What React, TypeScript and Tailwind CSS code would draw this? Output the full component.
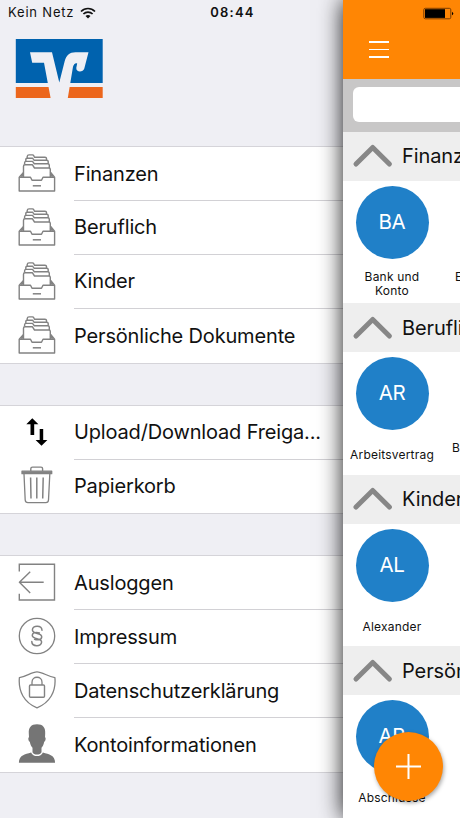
import React from 'react';

type Category = { title: string; initials: string; label: string; next?: React.ReactNode };

const categories: Category[] = [
  { title: 'Finanzen', initials: 'BA', label: 'Bank und Konto', next: <span className="ml-[3px]">E</span> },
  { title: 'Beruflich', initials: 'AR', label: 'Arbeitsvertrag', next: <span>B</span> },
  { title: 'Kinder', initials: 'AL', label: 'Alexander' },
  { title: 'Persönliche', initials: 'AB', label: 'Abschlüsse' },
];

// All menu icons share a 38px box and a thin grey stroke
function MenuSvg({ children }: { children: React.ReactNode }) {
  return (
    <svg width="38" height="38" viewBox="0 0 38 38" fill="none" stroke="#828282" strokeWidth="1.3" strokeLinejoin="round">
      {children}
    </svg>
  );
}

function DrawerIcon() {
  return (
    <MenuSvg>
      <path d="M1.2 23.2H12.5L14 26.3H23.5L25 23.2H36.6V37H1.2Z" strokeWidth="1.4" />
      <path d="M14.8 31.8H23" strokeWidth="1.5" />
      <path d="M5.5 23V12.3Q5.5 10.7 7 10.7H14.3L16.5 14H31Q32.3 14 32.3 15.5V23" strokeWidth="1.4" />
      <path d="M5.5 18.5L1.4 23M32.3 18L36.4 23M32.3 20L34.5 23M5.5 20.5L3.4 23" />
      <path d="M6.6 10.5V8.8Q6.6 7.4 8 7.4H14.5L16.3 9.7H29.8Q31.2 9.7 31.3 11V14" strokeWidth="1.4" />
      <path d="M7.8 7.2V5.6Q7.8 4.3 9.2 4.3H14.7L16.2 6.3H28.7Q30.2 6.3 30.2 7.5V9.7" strokeWidth="1.4" />
      <path d="M9.2 4V2.5Q9.4 .9 11 .9H14.4Q15.4 .9 15.8 1.8L16.4 3.2H27Q28.5 3.2 28.5 4.6V6.3" strokeWidth="1.4" />
    </MenuSvg>
  );
}

function UpDownIcon() {
  return (
    <svg width="38" height="38" viewBox="0 0 38 38" fill="#000">
      <path d="M14.3 5.2L20.4 11.2H16.2V22H12.5V11.2H8.3Z" />
      <path d="M23.5 32.8L17.6 26.9H21.7V16H25.2V26.9H29.4Z" />
    </svg>
  );
}

function TrashIcon() {
  return (
    <MenuSvg>
      <path d="M12.8 5V2.8Q12.8 1.1 14.5 1.1H23Q24.6 1.1 24.6 2.8V5" strokeWidth="1.4" />
      <path d="M4 5.2H33.7V7.7H4Z" fill="#828282" />
      <path d="M6 8L7.2 34Q7.4 36.6 10 36.6H27.8Q30.3 36.6 30.5 34L31.8 8" />
      <path d="M12.6 11.6L13 32.4M18.8 11.6V32.4M25.2 11.6L24.7 32.4" strokeWidth="1.5" />
    </MenuSvg>
  );
}

function LogoutIcon() {
  return (
    <MenuSvg>
      <path d="M1.3 8.4V1.3H36.5V37H1.3V30.8" strokeWidth="1.4" strokeLinejoin="miter" />
      <path d="M25.7 19.2H1.3M12.2 8.8L1.4 19.2L12.2 29.9" strokeWidth="1.4" />
    </MenuSvg>
  );
}

function ImprintIcon() {
  return (
    <MenuSvg>
      <circle cx="19" cy="19" r="17.7" />
      <path
        d="M24 13.2C23.7 7.6 14.3 8.2 14.4 13C14.5 17.5 23.6 15.6 23.7 19.7C23.8 23.2 18.9 23.2 16.6 22.4M21.4 16C18.6 14.8 14.2 15.4 14.3 18.6C14.4 22.8 23.6 20.7 23.6 25C23.5 30 14 29.9 13.8 24.6"
        strokeWidth="1.5"
        strokeLinecap="round"
      />
    </MenuSvg>
  );
}

function PrivacyIcon() {
  return (
    <MenuSvg>
      <path d="M1.4 6.6C8 5.7 13.6 .9 19 .9S30 5.7 36.9 6.6C38.2 20.5 31.8 31.6 19 36.8C6.2 31.6 .1 20.5 1.4 6.6Z" />
      <rect x="11.5" y="14" width="15" height="12.3" rx="1" strokeWidth="1.4" />
      <path d="M14 14V11.2C14 4.6 24 4.6 24 11.2V14" />
    </MenuSvg>
  );
}

function AccountIcon() {
  return (
    <svg width="38" height="39" viewBox="0 0 38 39" fill="#757575">
      <path d="M19 .2C13 .2 10.4 3.5 10.8 9.4L11 13.2C9.8 13.5 10.4 17.2 11.8 17.7C12.3 20.7 13.4 22.5 14.5 23.7V28.2C15.6 31.4 22.4 31.4 23.5 28.2V23.7C24.6 22.5 25.7 20.7 26.2 17.7C27.6 17.2 28.2 13.5 27 13.2L27.2 9.4C27.6 3.5 25 .2 19 .2Z" />
      <path d="M13.1 28.4C7 30.4 1 30.8.9 38.8H37.1C37 30.8 31 30.4 24.9 28.4C23.2 33.2 14.8 33.2 13.1 28.4Z" />
    </svg>
  );
}

function MenuRow({ icon, text, last }: { icon: React.ReactNode; text: string; last?: boolean }) {
  return (
    <div className="flex h-[53.85px] items-center pl-[18px]">
      <div className="pb-[2px]">{icon}</div>
      <div
        className={
          last
            ? 'ml-[18px] flex h-full flex-1 items-center'
            : 'ml-[18px] flex h-full flex-1 items-center border-b border-[#d2d1d5]'
        }
      >
        <span className="text-[20px] tracking-[-0.16px]">{text}</span>
      </div>
    </div>
  );
}

function MenuGroup({ children }: { children: React.ReactNode }) {
  return <div className="-mb-px border-y border-[#d5d4d9] bg-white">{children}</div>;
}

function VrLogo() {
  return (
    <svg className="ml-[15px] mt-[12px]" width="88" height="60" viewBox="0 0 88 60">
      <path d="M.8 1H87.7V45H.8Z" fill="#0062ae" />
      <path d="M.8 49H87.7V60H.8Z" fill="#ec661c" />
      <path
        d="M15 14.2H37L44.3 44.5L49.6 23.5C51.4 17 54.5 14.2 60.5 14.2H73.5L69.3 30.5C68.2 34.6 60.8 34.6 61.3 29.8L62.2 25.4C60.3 24.6 58.6 26.2 58 28.8L52.8 60H35.6L29 24.8H17.2Z"
        fill="#efeff4"
      />
    </svg>
  );
}

function WifiIcon() {
  return (
    <svg className="ml-[6px]" width="16" height="12" viewBox="0 0 16 12" fill="none" stroke="#111" strokeWidth="1.7">
      <path d="M1 4.5C5 .5 11 .5 15 4.5M3.4 7C6 4.4 10 4.4 12.6 7" />
      <path d="M8 11.5L5.5 9C7 7.7 9 7.7 10.5 9Z" fill="#111" stroke="none" />
    </svg>
  );
}

function CategorySection({ title, initials, label, next }: Category) {
  return (
    <section className="h-[171.5px]">
      <div className="flex h-[49px] items-center bg-[#eee]">
        <svg className="ml-[9px] shrink-0" width="42" height="26" viewBox="0 0 42 26" fill="none">
          <path d="M4 21L20.7 4.5L37.4 21" stroke="#878787" strokeWidth="5" strokeLinecap="round" strokeLinejoin="round" />
        </svg>
        <h2 className="ml-[8px] whitespace-nowrap text-[20px] tracking-[-0.1px]">{title}</h2>
      </div>
      <div className="flex pt-[5px]">
        <div className="flex w-[98px] shrink-0 flex-col items-center">
          <div className="flex size-[73px] items-center justify-center rounded-full bg-[#2080c8] text-[20.5px] tracking-[-0.4px] text-white">
            {initials}
          </div>
          <div className="mt-[10px] flex h-[30px] w-[86px] items-center justify-center text-center text-[12px] leading-[14px] tracking-[0.2px]">
            {label}
          </div>
        </div>
        {next && <div className="ml-[11px] pt-[84px] text-[12px] leading-[14px]">{next}</div>}
      </div>
    </section>
  );
}

export default function App() {
  return (
    <div className="relative flex h-[818px] w-[460px] overflow-hidden bg-[#efeff4] font-['Inter',sans-serif] text-[#111]">
      <nav className="w-[343px] shrink-0">
        <div className="h-[146.2px]">
          <div className="flex h-[26px] items-center pl-[8px] text-[13px] tracking-[0.8px]">
            Kein Netz
            <WifiIcon />
            <span className="ml-[114px] font-semibold tracking-[1.2px]">08:44</span>
          </div>
          <VrLogo />
        </div>
        <div className="flex flex-col gap-[42.1px]">
          <MenuGroup>
            <MenuRow icon={<DrawerIcon />} text="Finanzen" />
            <MenuRow icon={<DrawerIcon />} text="Beruflich" />
            <MenuRow icon={<DrawerIcon />} text="Kinder" />
            <MenuRow icon={<DrawerIcon />} text="Persönliche Dokumente" last />
          </MenuGroup>
          <MenuGroup>
            <MenuRow icon={<UpDownIcon />} text="Upload/Download Freiga..." />
            <MenuRow icon={<TrashIcon />} text="Papierkorb" last />
          </MenuGroup>
          <MenuGroup>
            <MenuRow icon={<LogoutIcon />} text="Ausloggen" />
            <MenuRow icon={<ImprintIcon />} text="Impressum" />
            <MenuRow icon={<PrivacyIcon />} text="Datenschutzerklärung" />
            <MenuRow icon={<AccountIcon />} text="Kontoinformationen" last />
          </MenuGroup>
        </div>
      </nav>

      {/* Main screen, pushed aside by the open drawer */}
      <main className="relative h-full w-[117px] shrink-0 bg-white shadow-[0_0_22px_rgba(0,0,0,0.9)]">
        <div className="h-full overflow-hidden">
          <header className="h-[79px] bg-[#ff8604]">
            <div className="flex h-[26px] items-center justify-end pr-[6px]">
              <svg width="31" height="13" viewBox="0 0 31 13">
                <rect x=".8" y="1.3" width="27" height="10.5" rx="1.5" fill="none" stroke="#7a3b00" />
                <rect x="2" y="2.2" width="20" height="8.7" fill="#000" />
                <path d="M29 4.7Q31.5 6.5 29 8.3Z" fill="#000" />
              </svg>
            </div>
            <div className="ml-[26px] mt-[15px] flex w-[20px] flex-col gap-[6px]">
              <div className="h-[1.5px] bg-white" />
              <div className="h-[1.5px] bg-white" />
              <div className="h-[1.5px] bg-white" />
            </div>
          </header>
          <div className="h-[52.5px] bg-[#c8c7c7] pl-[10px] pt-[8px]">
            <div className="h-[35px] rounded-l-[6px] bg-white" />
          </div>
          {categories.map((c) => (
            <CategorySection key={c.title} {...c} />
          ))}
        </div>
        <button className="absolute left-[31px] top-[732px] flex size-[69px] items-center justify-center rounded-full bg-[#ff8604] shadow-[1px_2px_4px_rgba(0,0,0,0.35)]">
          <svg width="26" height="26" viewBox="0 0 26 26" stroke="#fff" strokeWidth="2">
            <path d="M12.5 0V25M0 12.5H25" />
          </svg>
        </button>
      </main>
    </div>
  );
}
